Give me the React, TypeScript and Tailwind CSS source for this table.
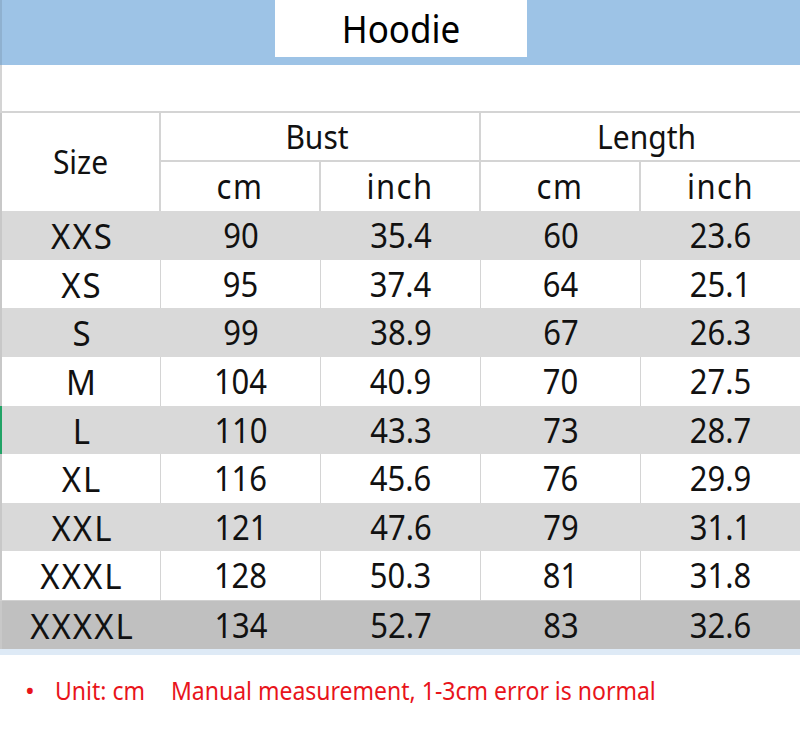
const rows: { size: string; bustCm: string; bustIn: string; lenCm: string; lenIn: string; tone: 'gray' | 'white' | 'dark' }[] = [
  { size: 'XXS', bustCm: '90', bustIn: '35.4', lenCm: '60', lenIn: '23.6', tone: 'gray' },
  { size: 'XS', bustCm: '95', bustIn: '37.4', lenCm: '64', lenIn: '25.1', tone: 'white' },
  { size: 'S', bustCm: '99', bustIn: '38.9', lenCm: '67', lenIn: '26.3', tone: 'gray' },
  { size: 'M', bustCm: '104', bustIn: '40.9', lenCm: '70', lenIn: '27.5', tone: 'white' },
  { size: 'L', bustCm: '110', bustIn: '43.3', lenCm: '73', lenIn: '28.7', tone: 'gray' },
  { size: 'XL', bustCm: '116', bustIn: '45.6', lenCm: '76', lenIn: '29.9', tone: 'white' },
  { size: 'XXL', bustCm: '121', bustIn: '47.6', lenCm: '79', lenIn: '31.1', tone: 'gray' },
  { size: 'XXXL', bustCm: '128', bustIn: '50.3', lenCm: '81', lenIn: '31.8', tone: 'white' },
  { size: 'XXXXL', bustCm: '134', bustIn: '52.7', lenCm: '83', lenIn: '32.6', tone: 'dark' },
];

const font = { fontFamily: '"Noto Sans", "Open Sans", sans-serif' };

// Row heights alternate so the grid lands on the same lines as the sheet
const heights = ['h-[49px]', 'h-[48px]', 'h-[49px]', 'h-[49px]', 'h-[48px]', 'h-[49px]', 'h-[48px]', 'h-[49px]', 'h-[49px]'];

function DataRow({ row, h, selected }: { row: (typeof rows)[number]; h: string; selected: boolean }) {
  const bg = row.tone === 'gray' ? 'bg-[#d9d9d9]' : row.tone === 'dark' ? 'bg-[#c0c0c0] border-t border-[#d0d0d0]' : 'bg-white';
  const line = row.tone === 'white' ? 'border-r border-[#d4d4d4]' : '';
  const cells = [row.size, row.bustCm, row.bustIn, row.lenCm, row.lenIn];
  const widths = ['w-[159px]', 'w-[160px]', 'w-[160px]', 'w-[160px]', 'w-[159px]'];

  return (
    <div className={`flex ${h} ${bg}`}>
      <div className={`w-[2px] shrink-0 ${selected ? 'bg-[#21a366]' : 'bg-[#c8c8c8]'}`} />
      {cells.map((c, i) => (
        <div
          key={i}
          className={`${widths[i]} shrink-0 flex items-center justify-center leading-none text-[#111] ${i === 0 ? 'text-[33px]' : 'text-[31px]'} ${i < 4 ? line : ''}`}
        >
          <span className={`scale-y-105 inline-block ${i === 0 ? 'tracking-[2px] pl-[2px]' : 'scale-y-110'}`}>{c}</span>
        </div>
      ))}
    </div>
  );
}

export default function App() {
  return (
    <div className="w-[800px] h-[730px] bg-white overflow-hidden" style={font}>
      {/* title band */}
      <div className="h-[65px] bg-[#9dc3e6] flex border-l-2 border-[#8fb1d0]">
        <div className="ml-[273px] w-[252px] h-[57px] bg-white flex items-center justify-center">
          <span className="text-[35px] leading-none text-black scale-y-110 inline-block">Hoodie</span>
        </div>
      </div>

      {/* empty row */}
      <div className="h-[48px] border-l-2 border-b-2 border-[#d4d4d4] bg-white" />

      {/* header */}
      <div className="grid grid-cols-[2px_159px_160px_160px_160px_159px] grid-rows-[49px_49px] bg-white text-[#111]">
        <div className="row-span-2 bg-[#c8c8c8]" />
        <div className="row-span-2 flex items-center justify-center border-r-2 border-[#d4d4d4] text-[30px] leading-none">
          <span className="scale-y-110 inline-block">Size</span>
        </div>
        <div className="col-span-2 flex items-center justify-center pr-[6px] border-r-2 border-b-2 border-[#d4d4d4] text-[30px] leading-none">
          <span className="scale-y-110 inline-block">Bust</span>
        </div>
        <div className="col-span-2 flex items-center justify-center pl-[12px] border-b-2 border-[#d4d4d4] text-[30px] leading-none">
          <span className="scale-y-110 inline-block">Length</span>
        </div>
        {['cm', 'inch', 'cm', 'inch'].map((u, i) => (
          <div
            key={i}
            className={`flex items-center justify-center text-[31px] leading-none ${i < 3 ? 'border-r-2 border-[#d4d4d4]' : ''}`}
          >
            <span className="scale-y-110 inline-block tracking-[1.5px]">{u}</span>
          </div>
        ))}
      </div>

      {rows.map((r, i) => (
        <DataRow key={r.size} row={r} h={heights[i]} selected={r.size === 'L'} />
      ))}

      <div className="h-[6px] bg-[#deeaf6]" />

      {/* note */}
      <div className="flex items-center h-[70px] text-[23px] text-[#e8141b] leading-none">
        <span className="ml-[25px] w-[30px] text-[26px]">•</span>
        <span className="scale-y-110 inline-block">Unit: cm</span>
        <span className="ml-[26px] scale-y-110 inline-block">Manual measurement, 1-3cm error is normal</span>
      </div>
    </div>
  );
}
